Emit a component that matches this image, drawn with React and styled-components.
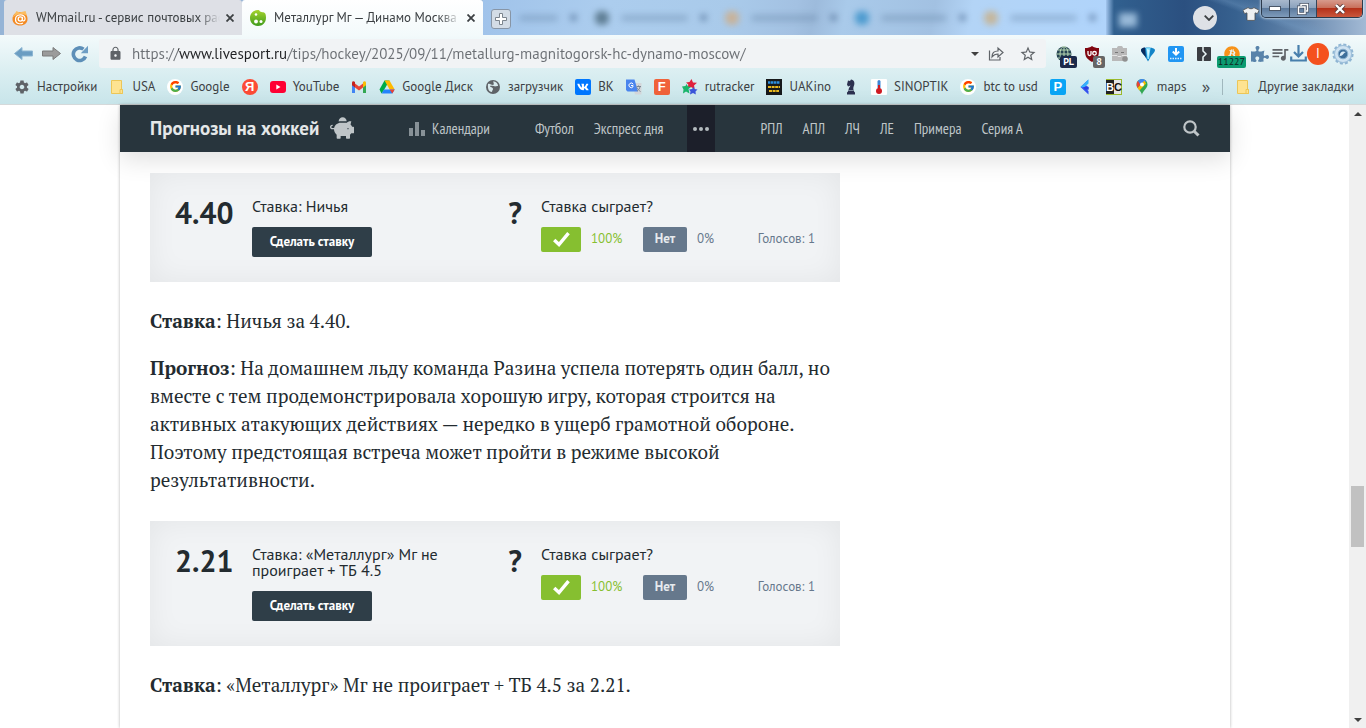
import React from 'react';
import styled, { createGlobalStyle } from 'styled-components';
import { FcGoogle } from 'react-icons/fc';
import { FaVk, FaPiggyBank, FaPuzzlePiece, FaBitcoin, FaTshirt } from 'react-icons/fa';
import { IoMdSettings } from 'react-icons/io';
import { MdLock, MdQueueMusic, MdStarBorder } from 'react-icons/md';

const GlobalStyle = createGlobalStyle`
  :root {
    --ui-font: 'PT Sans', 'Open Sans', 'Noto Sans', sans-serif;
    --site-font: 'PT Sans', 'Noto Sans', 'Open Sans', sans-serif;
    --narrow-font: 'PT Sans Narrow', 'Liberation Sans Narrow', 'Roboto Condensed', 'DejaVu Sans Condensed', sans-serif;
    --serif-font: 'PT Serif', 'Noto Serif', 'Liberation Serif', serif;
    --text-primary: #232b30;
    --header-bg: #28353d;
  }

  * {
    box-sizing: border-box;
  }

  body {
    margin: 0;
    background: #ffffff;
    color: var(--text-primary);
    font-family: var(--ui-font);
  }

  button,
  input {
    font: inherit;
    border: 0;
    padding: 0;
    margin: 0;
  }

  a {
    color: inherit;
    text-decoration: none;
  }

  p,
  h1 {
    margin: 0;
  }
`;

const Window = styled.div`
  min-height: 100vh;
  display: flex;
  flex-direction: column;
  overflow: hidden;
`;

/* ---------- browser frame ---------- */

const TabStrip = styled.div`
  display: flex;
  height: 35px;
  padding-left: 4px;
  overflow: hidden;
  background: #96b4d6;
`;

const Tab = styled.div`
  display: flex;
  align-items: center;
  width: ${({ $active }) => ($active ? 241 : 238)}px;
  flex: none;
  gap: 8px;
  padding: 0 4px 0 8px;
  border-radius: 3px 3px 0 0;
  background: ${({ $active }) => ($active ? 'linear-gradient(#ffffff, #f3fafb)' : '#dee0e6')};
`;

const TabTitle = styled.span`
  flex: 1;
  min-width: 0;
  margin-right: -6px;
  overflow: hidden;
  white-space: nowrap;
  font-size: 13px;
  line-height: 16px;
  color: #3c4043;
  mask-image: linear-gradient(to right, #000 88%, transparent);
`;

const IconButton = styled.button`
  display: flex;
  align-items: center;
  justify-content: center;
  flex: none;
  width: ${({ $w }) => $w || 16}px;
  height: ${({ $h }) => $h || 16}px;
  background: none;
  color: ${({ $color }) => $color || '#3c4043'};
`;

const Glass = styled.div`
  flex: 1;
  min-width: 0;
  display: flex;
  align-items: center;
  padding-left: 8px;
  background: linear-gradient(
    100deg,
    #a0c3ea 0%,
    #accdee 20%,
    #a9caea 40%,
    #a3c1e2 50%,
    #9dbbdc 53%,
    #a9caea 58%,
    #a2c1e2 72%,
    #b3d4f6 78%,
    #b0d4fb 100%
  );
`;

const NewTab = styled.button`
  display: flex;
  align-items: center;
  justify-content: center;
  flex: none;
  width: 20px;
  height: 20px;
  margin-top: 3px;
  border: 1px solid #8795a6;
  border-radius: 3px;
  background: #d3dce6;
`;

const GhostTab = styled.div`
  display: flex;
  flex: ${({ $short }) => ($short ? '0 0 76px' : 1)};
  min-width: 0;
  align-items: center;
  gap: 12px;
  height: 35px;
  padding: 0 10px 0 8px;
  filter: blur(3px);
`;

const GhostBlock = styled.span`
  height: ${({ $h }) => $h}px;
  width: ${({ $w }) => $w}px;
  flex: ${({ $grow }) => ($grow ? 1 : 'none')};
  background: ${({ $color }) => $color};
  border-radius: 6px;
`;

const Frame = styled.div`
  display: flex;
  align-items: flex-start;
  flex: none;
  width: 260px;
  padding-right: 3px;
  background: linear-gradient(20deg, transparent 55%, rgba(120, 160, 200, 0.35) 60%, transparent 68%),
    linear-gradient(to right, #a3c6ee 0, #31608f 8px, #2b5080 30%, #37618f 50%, #6586ac 75%, #a3bad5 100%);
`;

const FrameGhost = styled.span`
  width: 18px;
  height: 14px;
  margin: 13px 56px 0 13px;
  background: #98b9d8;
  filter: blur(3px);
`;

const Chevron = styled.button`
  display: flex;
  align-items: center;
  justify-content: center;
  width: 24px;
  height: 24px;
  margin: 6px 26px 0 0;
  border-radius: 50%;
  background: #dee1e6;
  padding-left: 8px;
`;

const Shirt = styled.span`
  display: flex;
  width: 17px;
  margin: 6px 0 0;
`;

const Controls = styled.div`
  display: flex;
  flex: 1;
  margin-left: 1px;
  height: 18px;
  border: 1px solid #2c3a4c;
  border-top: 0;
  border-radius: 0 0 5px 5px;
  overflow: hidden;
  box-shadow: 0 0 2px 1px rgba(255, 255, 255, 0.5);
`;

const ControlButton = styled.button`
  display: flex;
  align-items: center;
  justify-content: center;
  flex: ${({ $close }) => ($close ? 5 : 3)};
  border-left: ${({ $first }) => ($first ? 0 : '1px solid #35465a')};
  background: ${({ $close }) =>
    $close
      ? 'linear-gradient(#d79a8d 0%, #c9705c 45%, #b5311a 50%, #c9573c 100%)'
      : 'linear-gradient(#a9b9cd 0%, #8ba2bd 45%, #5d7b9e 50%, #7f9bba 100%)'};
`;

const Chrome = styled.div`
  background: linear-gradient(#f3fafb, #dceff2 50%, #c8e5ea);
  border-bottom: 1px solid #d5d9da;
`;

const Toolbar = styled.div`
  display: flex;
  align-items: center;
  height: 37px;
  padding: 0 9px 0 14px;
`;

const NavButtons = styled.div`
  display: flex;
  gap: 9px;
  margin-right: 9px;
`;

const Omnibox = styled.div`
  flex: 1;
  display: flex;
  align-items: center;
  gap: 9px;
  height: 29px;
  padding: 0 3px 0 9px;
  border-radius: 3px;
  background: #f1f3f5;
`;

const Address = styled.input`
  flex: 1;
  min-width: 0;
  height: 24px;
  outline: 0;
  font-size: 15px;
  background: linear-gradient(to right, #6b6f74 46px, #202124 46px, #202124 155px, #6b6f74 155px);
  background-clip: text;
  color: transparent;
`;

const Extensions = styled.div`
  display: flex;
  align-items: center;
  gap: 8px;
  margin-left: 8px;
`;

const Extension = styled.button`
  position: relative;
  display: flex;
  align-items: center;
  justify-content: center;
  width: 20px;
  height: 20px;
  background: none;
`;

const Badge = styled.span`
  position: absolute;
  right: ${({ $wide }) => ($wide ? -4 : -3)}px;
  bottom: -4px;
  padding: 0 ${({ $wide }) => ($wide ? 1 : 3)}px;
  border-radius: 2px;
  font-size: 10px;
  line-height: 12px;
  font-weight: ${({ $wide }) => ($wide ? 400 : 700)};
  color: ${({ $wide }) => ($wide ? '#10231d' : '#ffffff')};
  background: ${({ $bg }) => $bg};
`;

const ToolGroup = styled.div`
  display: flex;
  align-items: center;
`;

const Avatar = styled.button`
  width: 22px;
  height: 22px;
  border-radius: 50%;
  background: #f4511e;
  color: #ffffff;
  font-size: 13px;
  line-height: 22px;
`;

const Bookmarks = styled.nav`
  display: flex;
  align-items: center;
  gap: 12px;
  height: 32px;
  padding: 0 12px 3px 14px;
  font-family: var(--ui-font);
  font-size: 13px;
  line-height: 16px;
  color: #3c4043;
  white-space: nowrap;
`;

const Bookmark = styled.a`
  display: flex;
  align-items: center;
  gap: 7px;
`;

const Favicon = styled.span`
  display: flex;
  align-items: center;
  justify-content: center;
  width: 16px;
  height: 16px;
  flex: none;
  border-radius: ${({ $round }) => ($round ? '50%' : '2px')};
  background: ${({ $bg }) => $bg || 'none'};
  color: ${({ $color }) => $color || '#ffffff'};
  font-family: 'Liberation Sans', sans-serif;
  font-size: 13px;
  font-weight: 700;
  line-height: 16px;
`;

const More = styled.button`
  margin-left: auto;
  background: none;
  color: #4a4f54;
  font-size: 18px;
  line-height: 16px;
`;

const Divider = styled.span`
  flex: none;
  width: 1px;
  height: 16px;
  background: #a0b7bd;
`;

/* ---------- site ---------- */

const Viewport = styled.div`
  flex: 1;
  display: flex;
`;

const Page = styled.div`
  flex: 1;
  min-width: 0;
  padding: 0 15px 0 16px;
`;

const Sheet = styled.div`
  max-width: 1110px;
  height: 100%;
  margin: 0 auto;
  box-shadow: 0 0 3px rgba(0, 0, 0, 0.3);
`;

const SiteHeader = styled.header`
  display: flex;
  align-items: center;
  height: 47px;
  padding: 0 30px;
  background: var(--header-bg);
  box-shadow: 0 8px 24px rgba(0, 0, 0, 0.12);
  color: #bfc5c8;
  font-family: var(--narrow-font);
  font-size: 15px;
  white-space: nowrap;
`;

const SiteTitle = styled.h1`
  display: flex;
  align-items: center;
  gap: 11px;
  width: 259px;
  padding-bottom: 2px;
  font-family: var(--site-font);
  font-size: 19px;
  line-height: 24px;
  font-weight: 700;
  color: #e4e7e8;
`;

const Menu = styled.nav`
  display: flex;
  align-items: center;
  gap: 20px;
  margin-right: ${({ $after }) => $after || 0}px;
`;

const MenuLink = styled.a`
  display: flex;
  align-items: center;
  gap: 7px;
`;

const MoreMenu = styled.button`
  display: flex;
  align-items: center;
  justify-content: center;
  gap: 2px;
  width: 28px;
  height: 47px;
  margin-right: 45px;
  background: #1c1f2a;
`;

const Dot = styled.span`
  width: 4px;
  height: 4px;
  border-radius: 50%;
  background: #b4bbbf;
`;

const SearchButton = styled.button`
  display: flex;
  margin-left: auto;
  background: none;
`;

const Article = styled.article`
  max-width: 750px;
  padding: 21px 30px 28px;
`;

const Paragraph = styled.p`
  margin-top: ${({ $first }) => ($first ? 25 : 19)}px;
  font-family: var(--serif-font);
  font-size: 19px;
  line-height: 28px;
`;

const BetCard = styled.section`
  display: grid;
  grid-template-columns: 1fr 1fr;
  margin-top: ${({ $gap }) => ($gap ? 27 : 0)}px;
  padding: 25px 0;
  background: #f1f3f5;
  box-shadow: inset 0 0 30px rgba(0, 0, 0, 0.06);
  font-family: var(--site-font);
`;

const BetSide = styled.div`
  display: flex;
  gap: ${({ $vote }) => ($vote ? 16 : 19)}px;
  padding: ${({ $vote }) => ($vote ? '0 25px 0 10px' : '0 0 0 25px')};
`;

const Odds = styled.strong`
  width: ${({ $mark }) => ($mark ? 20 : 58)}px;
  flex: none;
  text-align: center;
  font-size: 30px;
  line-height: 30px;
  font-weight: 700;
`;

const BetBody = styled.div`
  flex: 1;
`;

const BetTitle = styled.p`
  max-width: 200px;
  margin-bottom: 13px;
  font-size: 16px;
  line-height: 16px;
`;

const BetButton = styled.button`
  width: 120px;
  height: 30px;
  padding-bottom: 2px;
  border-radius: 2px;
  background: #2f3e48;
  color: #ffffff;
  font-size: 13px;
  font-weight: 700;
`;

const VoteRow = styled.div`
  display: flex;
  align-items: center;
  gap: 10px;
  font-size: 13px;
  line-height: 16px;
`;

const VoteButton = styled.button`
  display: flex;
  align-items: center;
  justify-content: center;
  width: ${({ $yes }) => ($yes ? 40 : 44)}px;
  height: 25px;
  padding-bottom: 1px;
  border-radius: 2px;
  background: ${({ $yes }) => ($yes ? '#86bf30' : '#66788c')};
  color: #e6eaee;
  font-weight: 600;
`;

const Percent = styled.span`
  width: ${({ $yes }) => ($yes ? 42 : 20)}px;
  padding-bottom: 2px;
  color: ${({ $yes }) => ($yes ? '#86bf30' : '#66788c')};
`;

const Total = styled.span`
  margin-left: auto;
  padding-bottom: 2px;
  color: #66788c;
`;

const Scrollbar = styled.div`
  display: flex;
  flex-direction: column;
  align-items: center;
  width: 17px;
  flex: none;
  background: #f0f0f0;
`;

const ScrollArrow = styled.span`
  display: flex;
  align-items: center;
  justify-content: center;
  width: 17px;
  height: 17px;
`;

const Track = styled.span`
  flex: ${({ $part }) => $part};
`;

const Thumb = styled.span`
  width: 13px;
  height: 61px;
  background: #c1c1c1;
`;

/* ---------- icons ---------- */

const CloseIcon = () => (
  <svg width="8" height="8" viewBox="0 0 8 8" stroke="#3c4043" strokeWidth="1.8">
    <path d="M0.5 0.5 7.5 7.5M7.5 0.5 0.5 7.5" />
  </svg>
);

const MailIcon = () => (
  <svg width="16" height="16" viewBox="0 0 16 16">
    <path d="M8 2c5 0 7.500 3 7.500 7s-3 6.500-7.500 6.500S.5 13 .5 9 3 2 8 2z" fill="#f48a22" />
    <path d="M.5 7.500 4.500 1l3 1.500L13.500 1 15 5.500C10 3 5 3.500.5 7.500z" fill="#fbbd62" />
    <circle cx="8.300" cy="9" r="2.100" fill="none" stroke="#fff" strokeWidth="1.300" />
    <path d="M10.500 6.800V10c0 1.600 2.600 1.200 2.600-1.200 0-5.600-9.600-5.200-9.600.6 0 4.600 5 5 7.500 3.600" fill="none" stroke="#fff" strokeWidth="1.200" />
  </svg>
);

const BallIcon = () => (
  <svg width="16" height="16" viewBox="0 0 16 16">
    <defs>
      <linearGradient id="ball" x2="0" y2="1">
        <stop offset="0" stopColor="#a6d32c" />
        <stop offset="1" stopColor="#3f9b1d" />
      </linearGradient>
    </defs>
    <path d="M8 0c2 0 1 1.500 3.500 2S16 2 16 7.500 12.500 16 8 16 0 12.500 0 8 3.500 0 8 0z" fill="url(#ball)" />
    <circle cx="6" cy="4.500" r="1.300" fill="#fff" />
    <circle cx="6" cy="11.500" r="1.900" fill="#fff" />
    <circle cx="11" cy="11.500" r="1.500" fill="#fff" />
  </svg>
);

const ArrowIcon = ({ back }) => (
  <svg width="19" height="13" viewBox="0 0 19 13">
    <path
      d={back ? 'M.5 6.500 8 .5v3.500h10.500v5H8v3.500z' : 'M18.500 6.500 11 .5v3.500H.5v5H11v3.500z'}
      fill={back ? '#6b9dc2' : '#9b9b9b'}
      stroke={back ? '#8db6d3' : '#7b7b7b'}
    />
  </svg>
);

const ReloadIcon = () => (
  <svg width="18" height="18" viewBox="0 0 18 18">
    <path d="M14.500 11.500A6.300 6.300 0 1 1 12.500 4.200" fill="none" stroke="#5d8fb8" strokeWidth="3.600" />
    <path d="M17 .8v7.400H9.800z" fill="#6e9ec4" />
  </svg>
);

const FolderIcon = () => (
  <svg width="16" height="16" viewBox="0 0 16 16">
    <path d="M2.500 1.500h10v9h1v4h-11z" fill="#fee391" stroke="#ecc657" />
    <path d="M11 10.500h2.500v4H11z" fill="#fee391" stroke="#ecc657" />
  </svg>
);

const YoutubeIcon = () => (
  <svg width="16" height="16" viewBox="0 0 16 16">
    <rect y="2" width="16" height="12" rx="3" fill="#ff0033" />
    <path d="M6.300 5.500v5l4.200-2.500z" fill="#fff" />
  </svg>
);

const GmailIcon = () => (
  <svg width="16" height="16" viewBox="0 0 16 16">
    <path d="M1 4v10h3V7z" fill="#4285f4" />
    <path d="M15 4v10h-3V7z" fill="#34a853" />
    <path d="M4 4.500v4l4 3 4-3v-4l-4 3z" fill="#ea4335" />
    <path d="M1 4c0-1.800 1.500-2.200 3-1v5.500L1 6.300z" fill="#c5221f" />
    <path d="M15 4c0-1.800-1.500-2.200-3-1v5.500l3-2.200z" fill="#fbbc04" />
  </svg>
);

const DriveIcon = () => (
  <svg width="16" height="16" viewBox="0 0 16 16">
    <path d="M5.500 1.500h5L5 11l-2.500 3.500L.5 10.500z" fill="#00ac47" />
    <path d="M10.500 1.500 15.700 10.500h-5L5.500 1.500z" fill="#ffba00" />
    <path d="M5 10.500h10.700L13.300 14.500H2.600z" fill="#2684fc" />
    <path d="M10.700 10.500h5l-2.400 4z" fill="#ea4335" />
  </svg>
);

const GlobeIcon = () => (
  <svg width="16" height="16" viewBox="0 0 16 16">
    <circle cx="8" cy="8" r="7" fill="#5f6368" />
    <path d="M3 5c2-1 3 1 5 1 1 0 1-2 0-3.500 3 0 5 2 5 4.500-2 0-3 1-4 0-2 0-3-.5-4 0 0 1.500 3 1 3 3 0 1-1 1.500-1 3C4 13 2.500 10 3 5z" fill="#d8e9ec" />
  </svg>
);

const TranslateIcon = () => (
  <svg width="16" height="16" viewBox="0 0 16 16">
    <path d="M6 4h9.500v11.500H9z" fill="#d4d7da" />
    <path d="M0 .5h8.500L12 12.500H1.500L0 11z" fill="#4a85ee" />
    <path d="M7.300 5.300A2.300 2.300 0 1 0 7 7.800V6.500H5" fill="none" stroke="#fff" />
    <path d="M10.500 7.500h4.500M12.500 6.500v1M14 7.500c0 2-2 4-3 4.500M11 8.500c.5 1.500 2 3 3.500 4" fill="none" stroke="#7b8794" />
  </svg>
);

const RutrackerIcon = () => (
  <svg width="16" height="16" viewBox="0 0 16 16">
    <path d="M9.500 0 11 3.500l4 .2-3 2.800.8 3.500-4-2-3 1 .5-3.500L4 3.500l3.500-.5z" fill="#e0213c" />
    <path d="M4.500 5 6 7.500l3 .5-2.500 2 1 4.500-3.500-2-3 2 .5-4L0 7.500l3.500-.5z" fill="#19b56b" />
    <path d="m11.500 8 1 2 3 .5-2 2 .3 3L11 14l-3 1.500.5-3L7 10.500l3-.5z" fill="#3b55d9" />
  </svg>
);

const KinoIcon = () => (
  <svg width="16" height="16" viewBox="0 0 16 16">
    <rect width="16" height="16" fill="#17191b" />
    <path d="M2 3.500h12" stroke="#2d8fe0" strokeWidth="2.500" strokeDasharray="2.500 .5" />
    <path d="M2 8h12M3 12h10" stroke="#e8b71e" strokeWidth="2" strokeDasharray="3 .6" />
  </svg>
);

const KnightIcon = () => (
  <svg width="16" height="16" viewBox="0 0 16 16" fill="#2d3150">
    <path d="M5 1.500 7 2l1-1.500c3 .5 4 3 3 6 -.5 1.500-1 2-.5 4.500h-5c0-2 1.500-3 2-4.500L5 7.500 4 5.500z" />
    <path d="M5 11.500h6v1l1 1V15.500H4V13.500l1-1z" />
  </svg>
);

const ThermoIcon = () => (
  <svg width="16" height="16" viewBox="0 0 16 16">
    <rect width="16" height="16" rx="1" fill="#fff" />
    <rect x="6.500" y="1" width="3" height="9" rx="1.500" fill="#3c86d6" />
    <path d="M8 6v5" stroke="#cf1a22" strokeWidth="2" />
    <circle cx="8" cy="12" r="3" fill="#cf1a22" />
  </svg>
);

const FlagIcon = () => (
  <svg width="16" height="16" viewBox="0 0 16 16">
    <path d="m10.500.5-8 7.500 8 7.500V12L9 10.500h1.500V8L7.500 6z" fill="#3452f0" />
    <path d="M10.500.5v4L6 8.500 2.500 8z" fill="#36b2fa" />
    <path d="M5 8h5.500v2.500H7z" fill="#2c3ee0" />
  </svg>
);

const BCIcon = () => (
  <svg width="16" height="16" viewBox="0 0 16 16">
    <rect width="16" height="16" fill="#9aba2c" />
    <rect y="1" width="8" height="14" fill="#222" />
    <rect x="8" y="1" width="7" height="14" fill="#e6e6e6" />
    <text x="0" y="12" fontSize="11" fontWeight="700" fontFamily="Liberation Sans, sans-serif" fill="#fff">B</text>
    <text x="8" y="12" fontSize="11" fontWeight="700" fontFamily="Liberation Sans, sans-serif" fill="#111">C</text>
  </svg>
);

const PinIcon = () => (
  <svg width="16" height="16" viewBox="0 0 16 16">
    <path d="M8 16C7.500 12 2.500 9.500 2.500 5.500a5.500 5.500 0 0 1 11 0C13.500 9.500 8.500 12 8 16z" fill="#34a853" />
    <path d="M2.700 7A5.500 5.500 0 0 1 4 1.800l3 2.700-3.500 4.500z" fill="#ea4335" />
    <path d="M4 1.800A5.500 5.500 0 0 1 12.300 2L7 7z" fill="#4285f4" />
    <path d="m3.500 9 7-7.500 1.500 3-6.500 7z" fill="#fbbc04" />
    <circle cx="8" cy="5.500" r="2" fill="#fff" />
  </svg>
);

const WorldIcon = () => (
  <svg width="16" height="16" viewBox="0 0 16 16">
    <circle cx="8" cy="8" r="7.500" fill="#254453" />
    <path d="M.5 8h15M8 .5v15M2 4h12M2 12h12" stroke="#b9d8b4" />
    <ellipse cx="8" cy="8" rx="4" ry="7.500" fill="none" stroke="#b9d8b4" />
  </svg>
);

const ShieldIcon = () => (
  <svg width="16" height="16" viewBox="0 0 16 16">
    <path d="M8 0c2 1.500 4 2 7 2 0 7 0 10-7 14C1 12 1 9 1 2c3 0 5-.5 7-2z" fill="#800610" />
    <path d="M4 5v3c0 2 3 2 3 0V5" fill="none" stroke="#fff" strokeWidth="1.300" />
    <circle cx="10.500" cy="7.300" r="1.800" fill="none" stroke="#fff" strokeWidth="1.300" />
  </svg>
);

const ClipboardIcon = () => (
  <svg width="16" height="16" viewBox="0 0 16 16">
    <path d="M0 2h5c0-3 6-3 6 0h4v13H0z" fill="#b9b9b9" />
    <path d="M0 9.500h5l1 1h3l1-1h5" fill="none" stroke="#e4e4e4" />
    <path d="M3 6.500h3M9 6.500h3" stroke="#777" />
    <circle cx="13" cy="13" r="2.800" fill="#909090" />
  </svg>
);

const FunnelIcon = () => (
  <svg width="16" height="16" viewBox="0 0 16 16">
    <path d="M1 4c0-3.500 14-3.500 14 0 0 3-4 5-5 8l-2 3.500L6 12C5 9 1 7 1 4z" fill="#1384c8" />
    <path d="M1 4c0-2 3-2.600 4-2.600L6 12C5 9 1 7 1 4z" fill="#0a2c5e" />
    <path d="M6 2c2-1 4-.5 4.500 0L9 13H7.500z" fill="#7fdcfb" />
    <path d="m7 3 1 10 1.500-9z" fill="#d6f7ff" />
  </svg>
);

const SaverIcon = () => (
  <svg width="16" height="16" viewBox="0 0 16 16">
    <rect width="16" height="16" rx="2" fill="#2196f3" />
    <path d="M8 2v5M4.800 5.500 8 8.700l3.200-3.200" fill="none" stroke="#fff" strokeWidth="2" />
    <path d="M2 12.500h12" stroke="#d9efff" strokeWidth="1.500" strokeDasharray="1.500 1" />
  </svg>
);

const ZipIcon = () => (
  <svg width="16" height="16" viewBox="0 0 16 16">
    <rect x="1" y="1" width="14" height="14" rx="1" fill="#3b3d42" />
    <path d="M7 1v4l3 3-3 3v4" fill="none" stroke="#edf7f8" strokeWidth="1.500" />
  </svg>
);

const DownloadIcon = () => (
  <svg width="17" height="17" viewBox="0 0 17 17" fill="none" stroke="#477fac" strokeWidth="2.200">
    <path d="M8.500 0v11M4 7l4.500 4.500L13 7M1.200 11.500v4h14.600v-4" />
  </svg>
);

const GearIcon = () => (
  <svg width="22" height="22" viewBox="0 0 22 22">
    <circle cx="11" cy="11" r="9.300" fill="#b9d5ea" stroke="#8fb5d3" strokeWidth="2.600" strokeDasharray="2.900 1.970" />
    <circle cx="11" cy="11" r="8.500" fill="#cfe3f2" stroke="#9dbfda" />
    <circle cx="11" cy="11" r="4.800" fill="#3f6f9b" stroke="#86aecd" />
    <path d="M7.500 13c1-5 3-5 6.500-4-2 0-3 4.500-6.500 4z" fill="#dcecf7" />
  </svg>
);

const BarsIcon = () => (
  <svg width="16" height="14" viewBox="0 0 16 14" fill="#879197">
    <path d="M0 6h4v8H0zM6 0h4v14H6zM12 8h4v6h-4z" />
  </svg>
);

const SearchIcon = () => (
  <svg width="17" height="17" viewBox="0 0 17 17" fill="none" stroke="#bfc5c8">
    <circle cx="7" cy="7" r="5.700" strokeWidth="2.200" />
    <path d="m11.200 11.200 4.300 4.300" strokeWidth="3" />
  </svg>
);

const CheckIcon = () => (
  <svg width="17" height="15" viewBox="0 0 17 15" fill="none" stroke="#fff" strokeWidth="3.400">
    <path d="m1.200 8 4.800 4.500L15.500 1.200" />
  </svg>
);

const TriangleIcon = ({ down }) => (
  <svg width="8" height="4" viewBox="0 0 8 4">
    <path d={down ? 'M0 0h8L4 4z' : 'M0 4h8L4 0z'} fill="#404040" />
  </svg>
);

/* ---------- data ---------- */

const bookmarks = [
  { label: 'Настройки', icon: <IoMdSettings size={16} color="#5f6368" /> },
  { label: 'USA', icon: <FolderIcon /> },
  { label: 'Google', icon: <FcGoogle size={13} />, bg: '#ffffff', round: true },
  { icon: 'Я', bg: '#fc4b36', round: true, name: 'Яндекс' },
  { label: 'YouTube', icon: <YoutubeIcon /> },
  { icon: <GmailIcon />, name: 'Gmail' },
  { label: 'Google Диск', icon: <DriveIcon /> },
  { label: 'загрузчик', icon: <GlobeIcon /> },
  { label: 'ВК', icon: <FaVk size={12} />, bg: '#0077ff' },
  { icon: <TranslateIcon />, name: 'Переводчик' },
  { icon: 'F', bg: '#f0623a', name: 'F' },
  { label: 'rutracker', icon: <RutrackerIcon /> },
  { label: 'UAKino', icon: <KinoIcon /> },
  { icon: <KnightIcon />, name: 'Шахматы' },
  { label: 'SINOPTIK', icon: <ThermoIcon /> },
  { label: 'btc to usd', icon: <FcGoogle size={13} />, bg: '#ffffff', round: true },
  { icon: 'P', bg: '#0aa5f5', name: 'P' },
  { icon: <FlagIcon />, name: 'Лента' },
  { icon: <BCIcon />, name: 'BC' },
  { label: 'maps', icon: <PinIcon /> },
];

const extensions = [
  { name: 'VPN', icon: <WorldIcon />, badge: 'PL', bg: '#1b2a4b' },
  { name: 'Блокировщик', icon: <ShieldIcon />, badge: '8', bg: '#666666' },
  { name: 'Буфер', icon: <ClipboardIcon /> },
  { name: 'Фильтр', icon: <FunnelIcon /> },
  { name: 'Загрузка', icon: <SaverIcon /> },
  { name: 'Архив', icon: <ZipIcon /> },
  { name: 'Биткоин', icon: <FaBitcoin size={16} color="#f7931a" />, badge: '11227', bg: '#0b9b70', wide: true },
];

const ghostTabs = ['', '#5f7e94', '#c8b299', '#4d9bcf', '#c5b69b'];

const leagues = ['РПЛ', 'АПЛ', 'ЛЧ', 'ЛЕ', 'Примера', 'Серия А'];

const Bet = ({ odds, title, gap }) => (
  <BetCard $gap={gap}>
    <BetSide>
      <Odds>{odds}</Odds>
      <BetBody>
        <BetTitle>{title}</BetTitle>
        <BetButton type="button">Сделать ставку</BetButton>
      </BetBody>
    </BetSide>
    <BetSide $vote>
      <Odds $mark>?</Odds>
      <BetBody>
        <BetTitle>Ставка сыграет?</BetTitle>
        <VoteRow>
          <VoteButton type="button" $yes aria-label="Да">
            <CheckIcon />
          </VoteButton>
          <Percent $yes>100%</Percent>
          <VoteButton type="button">Нет</VoteButton>
          <Percent>0%</Percent>
          <Total>Голосов: 1</Total>
        </VoteRow>
      </BetBody>
    </BetSide>
  </BetCard>
);

const App = () => (
  <>
    <GlobalStyle />
    <Window>
      <TabStrip>
        <Tab>
          <MailIcon />
          <TabTitle>WMmail.ru - сервис почтовых рас</TabTitle>
          <IconButton type="button" aria-label="Закрыть вкладку">
            <CloseIcon />
          </IconButton>
        </Tab>
        <Tab $active>
          <BallIcon />
          <TabTitle>Металлург Мг — Динамо Москва</TabTitle>
          <IconButton type="button" aria-label="Закрыть вкладку">
            <CloseIcon />
          </IconButton>
        </Tab>
        <Glass>
          <NewTab type="button" aria-label="Новая вкладка">
            <svg width="12" height="12" viewBox="0 0 12 12">
              <path d="M4.500.5h3v4h4v3h-4v4h-3v-4h-4v-3h4z" fill="#fff" stroke="#7c858e" />
            </svg>
          </NewTab>
          {ghostTabs.map((color, index) => (
            <GhostTab key={index} $short={index === 0}>
              {index > 0 && <GhostBlock $w={14} $h={14} $color={color} />}
              <GhostBlock $grow $h={6} $color="rgba(90, 120, 155, 0.35)" />
              <GhostBlock $w={7} $h={7} $color="rgba(70, 100, 140, 0.6)" />
            </GhostTab>
          ))}
        </Glass>
        <Frame>
          <FrameGhost />
          <Chevron type="button" aria-label="Поиск вкладок">
            <svg width="10" height="6" viewBox="0 0 10 6" fill="none" stroke="#3c4043" strokeWidth="1.800">
              <path d="m.7.7 4.300 4.300L9.300.7" />
            </svg>
          </Chevron>
          <Shirt>
            <FaTshirt size={16} color="#eef0f2" stroke="#444" strokeWidth={30} />
          </Shirt>
          <Controls>
            <ControlButton type="button" $first aria-label="Свернуть">
              <svg width="12" height="5" viewBox="0 0 12 5">
                <rect x=".5" y=".5" width="11" height="4" fill="#fff" stroke="#4b5768" />
              </svg>
            </ControlButton>
            <ControlButton type="button" aria-label="Развернуть">
              <svg width="12" height="12" viewBox="0 0 12 12" fill="none">
                <path d="M4 3V1.500h6.500V8H9M1.500 4h6.500v6.500H1.500z" stroke="#445064" strokeWidth="3" />
                <path d="M4 3V1.500h6.500V8H9M1.500 4h6.500v6.500H1.500z" stroke="#fff" strokeWidth="1.500" />
              </svg>
            </ControlButton>
            <ControlButton type="button" $close aria-label="Закрыть">
              <svg width="12" height="10" viewBox="0 0 12 10" fill="none">
                <path d="m2 1 8 8m0-8L2 9" stroke="#5a3a3a" strokeWidth="4" />
                <path d="m2 1 8 8m0-8L2 9" stroke="#fff" strokeWidth="2.400" />
              </svg>
            </ControlButton>
          </Controls>
        </Frame>
      </TabStrip>

      <Chrome>
        <Toolbar>
          <NavButtons>
            <IconButton type="button" $w={19} $h={20} aria-label="Назад">
              <ArrowIcon back />
            </IconButton>
            <IconButton type="button" $w={19} $h={20} aria-label="Вперёд">
              <ArrowIcon />
            </IconButton>
            <IconButton type="button" $w={20} $h={20} aria-label="Обновить">
              <ReloadIcon />
            </IconButton>
          </NavButtons>
          <Omnibox>
            <MdLock size={15} color="#5f6368" />
            <Address
              type="text"
              aria-label="Адрес"
              spellCheck={false}
              defaultValue="https://www.livesport.ru/tips/hockey/2025/09/11/metallurg-magnitogorsk-hc-dynamo-moscow/"
            />
            <TriangleIcon down />
            <IconButton type="button" aria-label="Поделиться">
              <svg width="16" height="16" viewBox="0 0 16 16" fill="none" stroke="#5f6368" strokeWidth="1.200">
                <path d="M1.500 4.500v9.500h10.500v-3" />
                <path d="M4 11c0-4 2-6 6-6V2l5 4.500L10 11V8c-3 0-4.500 1-6 3z" />
              </svg>
            </IconButton>
            <IconButton type="button" $w={30} aria-label="В закладки">
              <MdStarBorder size={18} color="#5f6368" />
            </IconButton>
          </Omnibox>
          <Extensions>
            {extensions.map((ext) => (
              <Extension key={ext.name} type="button" aria-label={ext.name}>
                {ext.icon}
                {ext.badge && (
                  <Badge $bg={ext.bg} $wide={ext.wide}>
                    {ext.badge}
                  </Badge>
                )}
              </Extension>
            ))}
            <ToolGroup>
              <IconButton type="button" $w={20} $h={20} aria-label="Расширения">
                <FaPuzzlePiece size={18} color="#5883aa" />
              </IconButton>
              <IconButton type="button" $w={20} $h={20} aria-label="Плеер">
                <MdQueueMusic size={20} color="#5f6368" />
              </IconButton>
              <IconButton type="button" $w={17} $h={20} aria-label="Загрузки">
                <DownloadIcon />
              </IconButton>
              <Avatar type="button">I</Avatar>
            </ToolGroup>
          </Extensions>
          <IconButton type="button" $w={28} $h={24} aria-label="Меню">
            <GearIcon />
          </IconButton>
        </Toolbar>

        <Bookmarks>
          {bookmarks.map((item, index) => (
            <Bookmark key={index} href="#" aria-label={item.label || item.name}>
              <Favicon $bg={item.bg} $round={item.round} $color={item.color}>
                {item.icon}
              </Favicon>
              {item.label}
            </Bookmark>
          ))}
          <More type="button">»</More>
          <Divider />
          <Bookmark href="#">
            <FolderIcon />
            Другие закладки
          </Bookmark>
        </Bookmarks>
      </Chrome>

      <Viewport>
        <Page>
          <Sheet>
            <SiteHeader>
              <SiteTitle>
                Прогнозы на хоккей
                <FaPiggyBank size={24} color="#bfc5c8" />
              </SiteTitle>
              <Menu $after={45}>
                <MenuLink href="#">
                  <BarsIcon />
                  Календари
                </MenuLink>
              </Menu>
              <Menu $after={24}>
                <MenuLink href="#">Футбол</MenuLink>
                <MenuLink href="#">Экспресс дня</MenuLink>
              </Menu>
              <MoreMenu type="button" aria-label="Ещё">
                <Dot />
                <Dot />
                <Dot />
              </MoreMenu>
              <Menu>
                {leagues.map((league) => (
                  <MenuLink key={league} href="#">
                    {league}
                  </MenuLink>
                ))}
              </Menu>
              <SearchButton type="button" aria-label="Поиск">
                <SearchIcon />
              </SearchButton>
            </SiteHeader>

            <Article>
              <Bet odds="4.40" title="Ставка: Ничья" />
              <Paragraph $first>
                <b>Ставка</b>: Ничья за 4.40.
              </Paragraph>
              <Paragraph>
                <b>Прогноз</b>: На домашнем льду команда Разина успела потерять один балл, но вместе с тем
                продемонстрировала хорошую игру, которая строится на активных атакующих действиях — нередко в
                ущерб грамотной обороне. Поэтому предстоящая встреча может пройти в режиме высокой
                результативности.
              </Paragraph>
              <Bet odds="2.21" title="Ставка: «Металлург» Мг не проиграет + ТБ 4.5" gap />
              <Paragraph $first>
                <b>Ставка</b>: «Металлург» Мг не проиграет + ТБ 4.5 за 2.21.
              </Paragraph>
            </Article>
          </Sheet>
        </Page>
        <Scrollbar>
          <ScrollArrow>
            <TriangleIcon />
          </ScrollArrow>
          <Track $part={364} />
          <Thumb />
          <Track $part={164} />
          <ScrollArrow>
            <TriangleIcon down />
          </ScrollArrow>
        </Scrollbar>
      </Viewport>
    </Window>
  </>
);

export default App;
